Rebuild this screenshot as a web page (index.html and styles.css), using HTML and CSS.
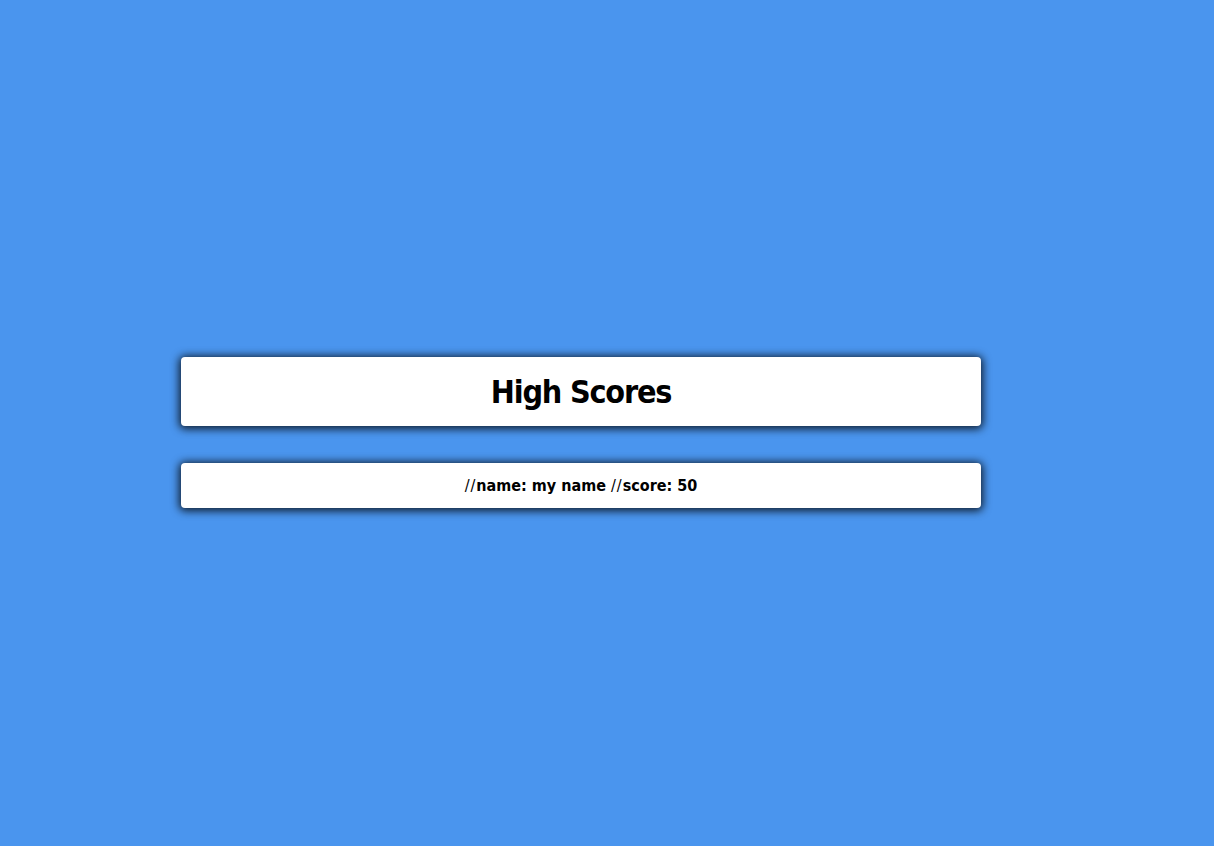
FILE: index.html
```html
<!DOCTYPE html>
<html lang="en">
<head>
<meta charset="utf-8">
<title>High Scores</title>
<link rel="stylesheet" href="styles.css">
</head>
<body>
<main class="board">
  <section class="card title-card">
    <h1 class="title">High Scores</h1>
  </section>
  <section class="card score-card">
    <p class="score"><span class="slash">//</span>name: my name <span class="slash">//</span>score: 50</p>
  </section>
</main>
</body>
</html>
```
FILE: styles.css
```css
html, body {
  margin: 0;
  padding: 0;
}
body {
  background: #4a95ee;
  min-height: 100vh;
  font-family: "DejaVu Sans Condensed", "DejaVu Sans", sans-serif;
  color: #000;
}
.board {
  display: flex;
  flex-direction: column;
  gap: 37px;
  width: 800px;
  padding: 357px 0 0 181px;
}
.card {
  background: #fff;
  border-radius: 4px;
  box-shadow: 0 1px 8px 2px rgba(0, 0, 0, 0.8);
  display: flex;
  align-items: center;
  justify-content: center;
}
.title-card {
  height: 69px;
}
.title {
  margin: 0;
  font-size: 32px;
  font-weight: bold;
  letter-spacing: -1.2px;
  line-height: 1;
  padding-top: 1px;
}
.score-card {
  height: 45px;
}
.score {
  margin: 0;
  font-size: 16px;
  font-weight: bold;
  line-height: 1;
}
.slash {
  font-weight: normal;
  letter-spacing: 1px;
}
```
